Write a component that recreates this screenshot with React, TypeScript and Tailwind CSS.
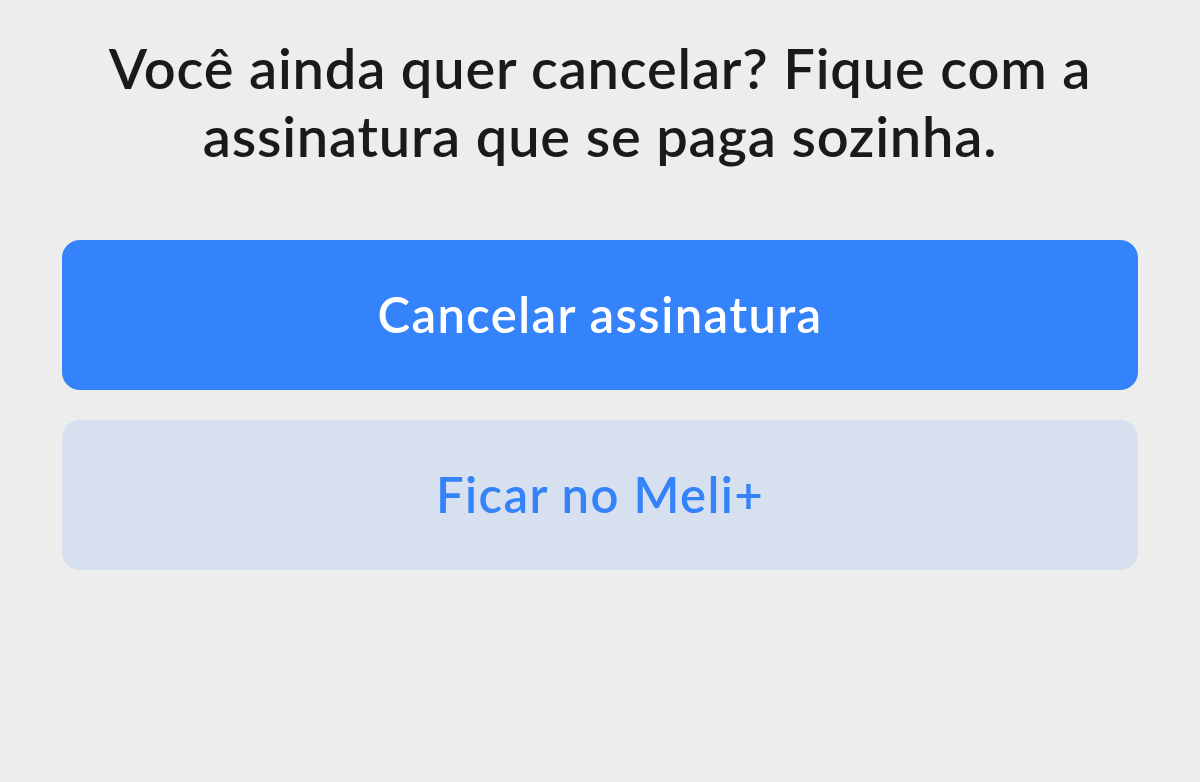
export default function App() {
  return (
    <div className="min-h-[782px] w-full bg-[#ededed] font-['Lato',sans-serif]">
      <div className="px-[62px] pt-[34px]">
        <h1 className="mx-auto max-w-[1010px] text-center text-[56px] font-semibold leading-[68px] tracking-[0.8px] text-[#1a1a1a]">
          Você ainda quer cancelar? Fique com a assinatura que se paga sozinha.
        </h1>

        <div className="mt-[70px] flex flex-col gap-[30px]">
          <button
            type="button"
            className="h-[150px] w-full rounded-[18px] bg-[#3483fa] text-[49px] font-semibold tracking-[1.4px] text-white"
          >
            Cancelar assinatura
          </button>
          <button
            type="button"
            className="h-[150px] w-full rounded-[18px] bg-[#d6e0ef] text-[49px] font-semibold tracking-[1.4px] text-[#3483fa]"
          >
            Ficar no Meli+
          </button>
        </div>
      </div>
    </div>
  );
}
